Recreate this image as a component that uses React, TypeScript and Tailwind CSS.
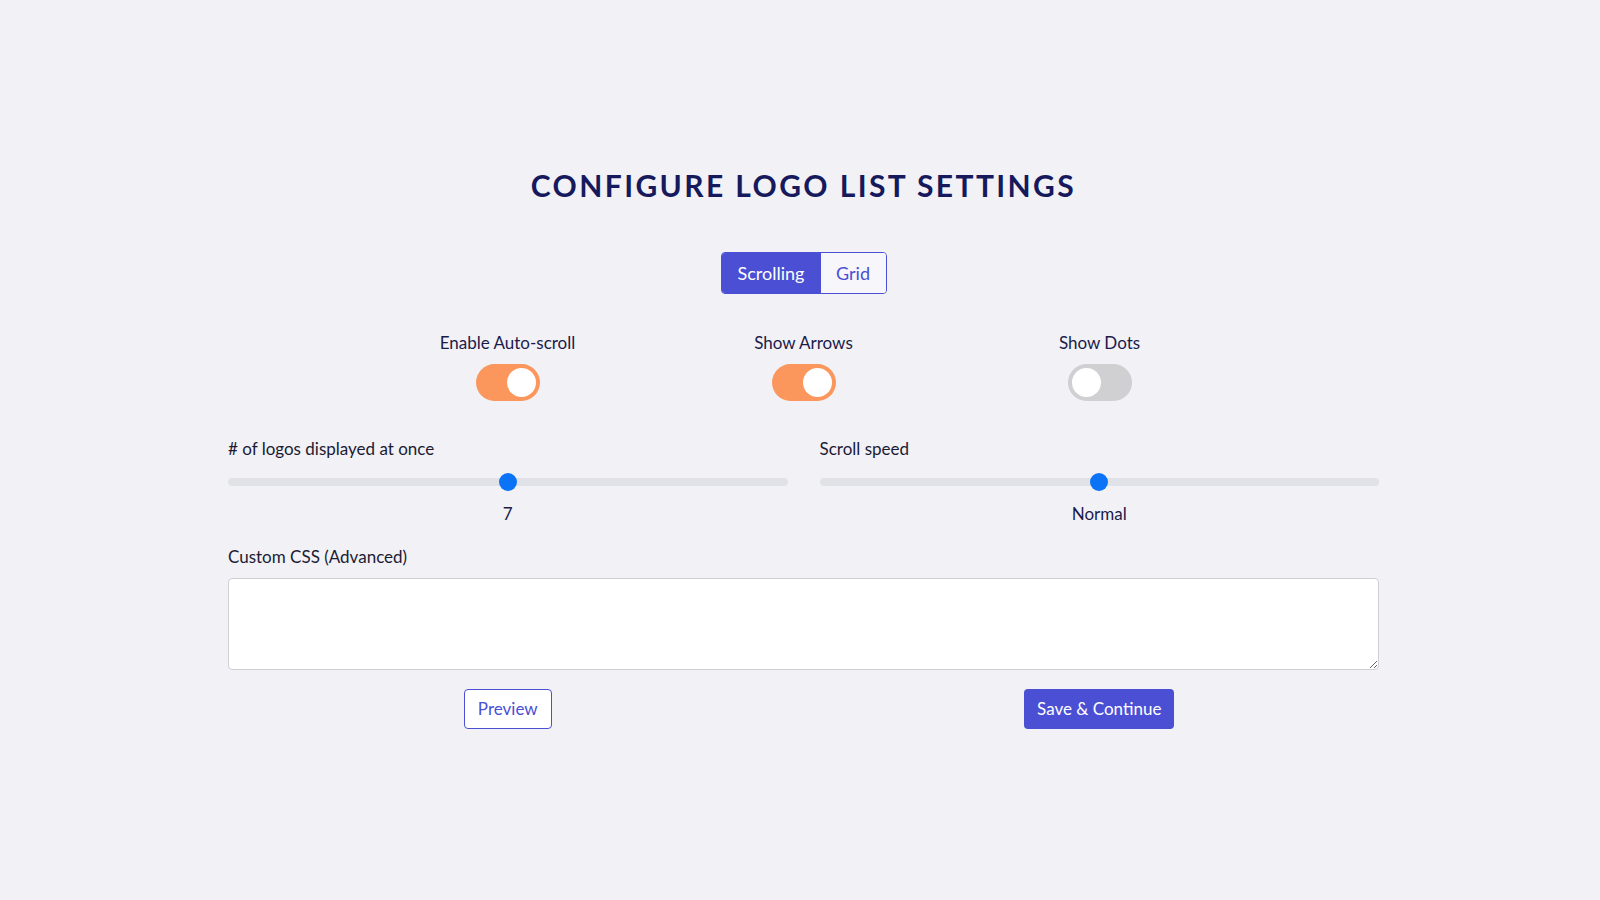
import React from "react";

function Toggle({ on }: { on: boolean }) {
  return (
    <div
      className={
        "flex h-[37px] w-[64px] items-center rounded-full px-[4px] " +
        (on ? "justify-end bg-[#fb965d]" : "justify-start bg-[#d0d0d2]")
      }
    >
      <div className="h-[29px] w-[29px] rounded-full bg-white" />
    </div>
  );
}

function Slider({ label, value }: { label: string; value: string }) {
  return (
    <div className="flex flex-col">
      <div className="text-[17px] leading-[24px] text-[#1b1b33]">{label}</div>
      <div className="relative mt-[11px] flex h-[20px] items-center">
        <div className="h-[8px] w-full rounded-full bg-[#e1e2e7]" />
        <div className="absolute left-1/2 top-1/2 h-[18px] w-[18px] -translate-x-1/2 -translate-y-1/2 rounded-full bg-[#0b74f6]" />
      </div>
      <div className="mt-[10px] text-center text-[17px] leading-[24px] text-[#1b1b4a]">{value}</div>
    </div>
  );
}

export default function App() {
  return (
    <div className="min-h-screen w-full bg-[#f1f1f6] font-['Lato',sans-serif]">
      <div className="ml-[228px] w-[1151px] pt-[165px]">
        <h1 className="text-center text-[30px] font-bold uppercase leading-[40px] tracking-[0.08em] text-[#161a5c]">
          Configure Logo List Settings
        </h1>

        <div className="mt-[47px] flex justify-center">
          <div className="flex h-[42px] overflow-hidden rounded-[4px] border border-[#4a4fd4]">
            <div className="flex w-[99px] items-center justify-center bg-[#4a4fd4] pt-[1px] text-[18px] text-white">
              Scrolling
            </div>
            <div className="flex w-[65px] items-center justify-center bg-[#f6f6fb] pt-[1px] text-[18px] text-[#4a4fd4]">
              Grid
            </div>
          </div>
        </div>

        <div className="mt-[37px] grid grid-cols-[296px_296px_296px] justify-center">
          {[
            ["Enable Auto-scroll", true],
            ["Show Arrows", true],
            ["Show Dots", false],
          ].map(([label, on]) => (
            <div key={label as string} className="flex flex-col items-center">
              <div className="text-[17px] leading-[24px] text-[#1b1b4a]">{label as string}</div>
              <div className="mt-[9px]">
                <Toggle on={on as boolean} />
              </div>
            </div>
          ))}
        </div>

        <div className="mt-[36px] grid grid-cols-2 gap-[32px]">
          <Slider label="# of logos displayed at once" value="7" />
          <Slider label="Scroll speed" value="Normal" />
        </div>

        <div className="mt-[19px] text-[17px] leading-[24px] text-[#1b1b33]">Custom CSS (Advanced)</div>
        <textarea className="mt-[9px] block h-[92px] w-full rounded-[4px] border border-[#cfd0d6] bg-white" />

        <div className="mt-[19px] grid grid-cols-2 gap-[32px]">
          <div className="flex justify-center">
            <button className="h-[40px] w-[88px] rounded-[4px] border border-[#4a4fd4] bg-white text-[17px] text-[#4a4fd4]">
              Preview
            </button>
          </div>
          <div className="flex justify-center">
            <button className="h-[40px] w-[150px] rounded-[4px] bg-[#4a4fd4] text-[17px] text-white">
              Save &amp; Continue
            </button>
          </div>
        </div>
      </div>
    </div>
  );
}
